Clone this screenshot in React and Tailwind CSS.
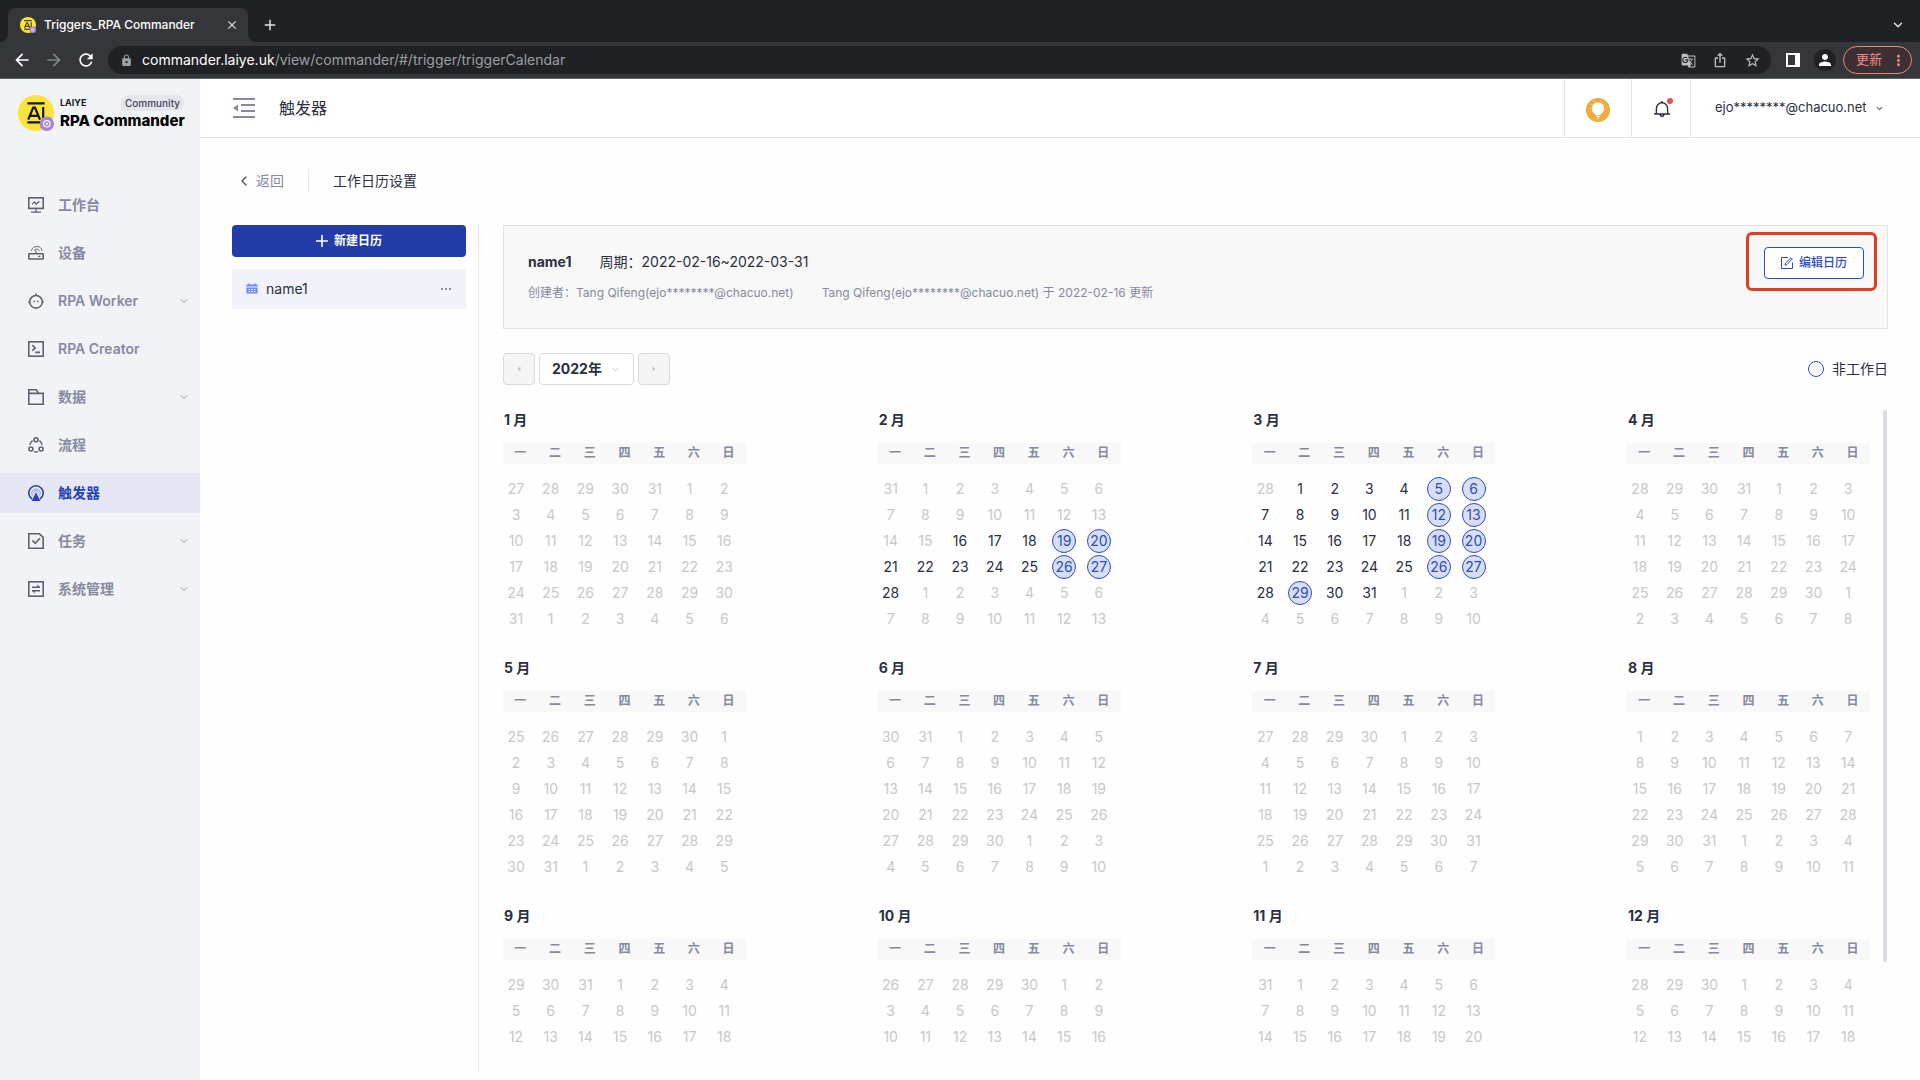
import React, { useState } from 'react';
import {
    MdArrowBack,
    MdArrowForward,
    MdRefresh,
    MdLock,
    MdClose,
    MdAdd,
    MdGTranslate,
    MdIosShare,
    MdStarBorder,
    MdPerson,
    MdMoreVert,
} from 'react-icons/md';
import { ChevronDown, ChevronLeft } from 'lucide-react';

const YEAR = 2022;
const PERIOD = { start: new Date(2022, 1, 16), end: new Date(2022, 2, 31) };
const EXTRA_DAYS_OFF = ['3-29'];
const WEEKDAYS = ['一', '二', '三', '四', '五', '六', '日'];

const NAV_ITEMS = [
    { label: '工作台', icon: 'board' },
    { label: '设备', icon: 'device' },
    { label: 'RPA Worker', icon: 'worker', expandable: true },
    { label: 'RPA Creator', icon: 'creator' },
    { label: '数据', icon: 'data', expandable: true },
    { label: '流程', icon: 'flow' },
    { label: '触发器', icon: 'trigger', active: true },
    { label: '任务', icon: 'task', expandable: true },
    { label: '系统管理', icon: 'system', expandable: true },
];

const NAV_ICONS = {
    board: (
        <>
            <rect x="0.8" y="0.8" width="14.4" height="10.6" />
            <path d="M8 11.4V15M3 15.2h10M4.2 7.4 6.4 5l2 2 3-2.8" strokeWidth="1.3" />
        </>
    ),
    device: (
        <>
            <rect x="0.8" y="8.8" width="14.4" height="5.2" rx="0.5" />
            <path d="M10 11.4h2.4M8 8.6V5.4" strokeWidth="1.2" />
            <path d="M3.4 6A5.2 5.2 0 0 1 8.9 1.5 5.2 5.2 0 0 1 14 6M5.9 6A3 3 0 0 1 11.5 6" strokeWidth="0.9" />
        </>
    ),
    worker: (
        <>
            <circle cx="8" cy="8.8" r="6.3" />
            <path d="M8 .2v2.2M.2 8.8h1.4M14.4 8.8h1.4M6.3 7.4v1.8M9.7 7.4v1.8" strokeWidth="1.3" />
        </>
    ),
    creator: (
        <>
            <rect x="0.8" y="0.8" width="14.4" height="14.4" />
            <path d="m4.2 4.2 3 2.8-3 2.6M7.2 11.4h4.8" />
        </>
    ),
    data: <path d="M.8 15.2V.8h7.4l2.4 3.6h4.6v10.8H.8ZM.8 4.4h9.8" />,
    flow: (
        <>
            <circle cx="8" cy="2.8" r="2" />
            <circle cx="2.9" cy="12" r="2" />
            <circle cx="13.1" cy="12" r="2" />
            <path d="M4.6 3.6A6.4 6.4 0 0 0 1.8 8M11.4 3.6A6.4 6.4 0 0 1 14.2 8M6 14.6q2 .7 4 0" strokeWidth="1.4" />
        </>
    ),
    trigger: (
        <>
            <path d="M4 14a7.2 7.2 0 1 1 8 0" />
            <path d="M4.4 10.6a4.3 4.3 0 1 1 7.2 0M6 8.6a2.2 2.2 0 1 1 4 0" strokeWidth="0.8" opacity="0.55" />
            <path d="M8 7.2 12.4 16H3.6Z" fill="currentColor" stroke="none" />
        </>
    ),
    task: <path d="M.8.8h10.6l3.8 3.6v10.8H.8ZM4.4 7.4l2.8 3 4.8-5.2" />,
    system: (
        <>
            <rect x="0.8" y="0.8" width="14.4" height="14.4" />
            <path d="M4 6.2h8M4 9.8h8" strokeWidth="1.4" />
            <path d="M9.2 3.6 12.4 6.4H9.2ZM6.8 12.4 3.6 9.6h3.2Z" fill="currentColor" stroke="none" />
        </>
    ),
};

const NavIcon = ({ name }) => (
    <svg viewBox="0 0 16 16" className="h-4 w-4 shrink-0" fill="none" stroke="currentColor" strokeWidth="1.6">
        {NAV_ICONS[name]}
    </svg>
);

const LogoMark = ({ className }) => (
    <svg viewBox="0 0 36 36" className={className} aria-hidden="true">
        <circle cx="18" cy="18" r="18" fill="#f9e43c" />
        <path d="M9.4 8.4h17.2M9.4 27.4H23" stroke="#15161a" strokeWidth="2.2" />
        <path d="M10.2 24.6 15.2 12.6h1.8l5 12M12.2 20.8h7.8M25.2 12v11" fill="none" stroke="#15161a" strokeWidth="2.2" />
        <circle cx="28.8" cy="28.8" r="7.2" fill="#a883d6" />
        <circle cx="28.8" cy="28.8" r="3.2" fill="none" stroke="#fff" strokeWidth="1.2" />
        <circle cx="28.8" cy="28.8" r="1.1" fill="#fff" />
    </svg>
);

const BrowserChrome = () => (
    <div className="shrink-0 bg-[#202124] text-[#dfe1e5]">
        <div className="flex h-[42px] items-end pr-4 pl-2">
            <div className="relative flex h-[34px] w-60 items-center rounded-t-lg bg-[#35363a] pr-2 pl-3">
                <svg viewBox="0 0 8 8" className="absolute bottom-0 -left-2 h-2 w-2 text-[#35363a]">
                    <path d="M8 0v8H0a8 8 0 0 0 8-8Z" fill="currentColor" />
                </svg>
                <svg viewBox="0 0 8 8" className="absolute -right-2 bottom-0 h-2 w-2 text-[#35363a]">
                    <path d="M0 0v8h8a8 8 0 0 1-8-8Z" fill="currentColor" />
                </svg>
                <LogoMark className="h-4 w-4" />
                <span className="ml-2 flex-1 text-xs font-medium whitespace-nowrap text-white">Triggers_RPA Commander</span>
                <button aria-label="Close tab" className="flex h-4 w-4 items-center justify-center">
                    <MdClose size={14} />
                </button>
            </div>
            <button aria-label="New tab" className="ml-3 flex h-[34px] w-5 items-center justify-center">
                <MdAdd size={18} />
            </button>
            <button aria-label="Search tabs" className="ml-auto flex h-[34px] w-3 items-center justify-center">
                <ChevronDown size={14} strokeWidth={2.6} className="shrink-0" />
            </button>
        </div>
        <div className="flex h-[37px] items-center border-b border-[#5f6368] bg-[#35363a] pr-2 pl-3">
            <button aria-label="Back" className="text-white"><MdArrowBack size={20} /></button>
            <button aria-label="Forward" className="ml-3 text-[#85878a]"><MdArrowForward size={20} /></button>
            <button aria-label="Reload" className="ml-3 text-white"><MdRefresh size={20} /></button>
            <div className="ml-3 flex h-7 flex-1 items-center rounded-full bg-[#202124] pr-2.5 pl-3 text-[#bdc1c6]">
                <MdLock size={13} className="text-[#9aa0a6]" />
                <span className="ml-[9px] text-sm text-[#9aa0a6]">
                    <span className="text-white">commander.laiye.uk</span>/view/commander/#/trigger/triggerCalendar
                </span>
                <button aria-label="Translate" className="ml-auto"><MdGTranslate size={15} /></button>
                <button aria-label="Share" className="ml-4"><MdIosShare size={16} /></button>
                <button aria-label="Bookmark" className="ml-4"><MdStarBorder size={17} /></button>
            </div>
            <button aria-label="Side panel" className="ml-[15px]">
                <svg viewBox="0 0 14 14" className="h-3.5 w-3.5">
                    <path d="M0 0h14v14H0Zm2 2v10h7V2Z" fill="#fff" fillRule="evenodd" />
                </svg>
            </button>
            <button aria-label="Profile" className="ml-3.5 flex h-[22px] w-[22px] items-center justify-center rounded-full bg-[#202124] text-white">
                <MdPerson size={18} />
            </button>
            <button className="ml-[7px] flex h-7 items-center rounded-full border border-[#e8877d] bg-[#3c3034] pr-1 pl-3 text-[13px] text-[#f28b82]">
                更新
                <MdMoreVert size={17} className="ml-2" />
            </button>
        </div>
    </div>
);

const Sidebar = () => (
    <aside className="w-50 shrink-0 bg-[#f2f3f7]">
        <div className="flex h-[106px] items-start pt-4 pl-[18px]">
            <LogoMark className="h-9 w-9 shrink-0" />
            <div className="ml-1.5 w-[124px]">
                <div className="flex items-center justify-between">
                    <span className="text-[9px] leading-4 font-bold text-[#15161a]">LAIYE</span>
                    <span className="rounded-full rounded-bl-none bg-[#e4e6ec] px-1 text-[10px] leading-4 font-medium text-[#3f4557]">
                        Community
                    </span>
                </div>
                <div className="text-[15px] leading-5 font-extrabold whitespace-nowrap text-black">RPA Commander</div>
            </div>
        </div>
        <nav className="flex flex-col gap-2 text-sm font-semibold text-[#858aa0]">
            {NAV_ITEMS.map((item) => (
                <a
                    key={item.label}
                    href="#"
                    className={`flex h-10 items-center pr-2.5 pl-7 ${item.active ? 'bg-[#e5e8f4] text-[#2543b5]' : ''}`}
                >
                    <span className={item.active ? 'text-[#2543b5]' : 'text-[#5d6273]'}>
                        <NavIcon name={item.icon} />
                    </span>
                    <span className="ml-3.5 flex-1">{item.label}</span>
                    {item.expandable && <ChevronDown size={12} strokeWidth={2} className="text-[#9a9eae]" />}
                </a>
            ))}
        </nav>
    </aside>
);

const TopBar = () => (
    <header className="flex h-[59px] shrink-0 items-stretch border-b border-[#e4e5ec] bg-white">
        <button aria-label="Collapse menu" className="ml-[33px] flex items-center pb-px">
            <svg viewBox="0 0 22 20" className="h-5 w-[22px]" fill="none" stroke="#858aa0" strokeWidth="2">
                <path d="M0 1h22M8 7h14M8 13h14M0 19h22" />
                <path d="M0 10 5 6.4v7.2Z" fill="#858aa0" stroke="none" />
            </svg>
        </button>
        <h1 className="ml-6 flex items-center text-base text-[#2a3040]">触发器</h1>
        <button aria-label="Tips" className="ml-auto flex w-[67px] items-center justify-center border-l border-[#e4e5ec] pt-1">
            <svg viewBox="0 0 24 24" className="h-6 w-6">
                <circle cx="12" cy="12" r="12" fill="#eeaa3c" />
                <path d="M12 4.6a6 6 0 0 0-3.2 11.1c.6.4.9.9 1 1.5h4.4c.1-.6.4-1.1 1-1.5A6 6 0 0 0 12 4.6Z" fill="#fff" />
                <path d="M10 18.4h4M10.8 20.2h2.4" stroke="#fff" strokeWidth="1" />
                <path d="M5.6 6.4h.8M17.6 6.4h.8M8 3.4h.8M15.2 3.4h.8M4.2 10.4H5M19 10.4h.8" stroke="#fff" strokeWidth="0.8" />
            </svg>
        </button>
        <button aria-label="Notifications" className="flex w-[59px] items-center justify-center border-l border-[#e4e5ec] pl-1">
            <svg viewBox="0 0 20 20" className="h-5 w-5" fill="none" stroke="#2a3040" strokeWidth="1.4">
                <path d="M1 16h16M3.4 16v-5.6a5.6 5.6 0 0 1 11.2 0V16M9 4.6V3M7.2 16.4a1.8 1.8 0 0 0 3.6 0" />
                <circle cx="17" cy="3" r="3" fill="#e5534b" stroke="none" />
            </svg>
        </button>
        <button className="flex w-[230px] items-center border-l border-[#e4e5ec] pl-6 text-[13px] text-[#2a3040]">
            ejo********@chacuo.net
            <ChevronDown size={9} strokeWidth={3} className="ml-2 text-[#5d6273]" />
        </button>
    </header>
);

const CalendarList = () => (
    <div className="w-[247px] shrink-0 border-r border-[#e8e9ee] pr-3">
        <button className="flex h-8 w-full items-center justify-center rounded bg-[#243ca8] text-xs font-semibold text-white">
            <svg viewBox="0 0 12 12" className="mr-1.5 h-3 w-3">
                <path d="M6 0v12M0 6h12" stroke="currentColor" strokeWidth="1.6" />
            </svg>
            新建日历
        </button>
        <div className="mt-3 flex h-10 items-center bg-[#f2f3fa] px-3.5 text-sm text-[#2a3040]">
            <svg viewBox="0 0 12 12" className="h-3 w-3" fill="#6b8afc">
                <path d="M.4 1.4h1.8V.4h1.4v1h4.8v-1h1.4v1h1.8v2.2H.4ZM.4 4.4h11.2v6.2H.4Z" />
                <path d="M2.6 6h1.6v1H2.6ZM5.2 6h1.6v1H5.2ZM7.8 6h1.6v1H7.8ZM2.6 8h1.6v1H2.6ZM5.2 8h1.6v1H5.2ZM7.8 8h1.6v1H7.8Z" fill="#fff" />
            </svg>
            <span className="ml-2 flex-1">name1</span>
            <button aria-label="More" className="p-px">
                <svg viewBox="0 0 10 2" className="h-0.5 w-2.5" fill="#8a8d99">
                    <path d="M0 0h2v2H0ZM4 0h2v2H4ZM8 0h2v2H8Z" />
                </svg>
            </button>
        </div>
    </div>
);

const DetailPanel = () => (
    <div className="flex items-start justify-between border border-[#e1e3ea] bg-[#f8f8f8] pt-[21px] pr-[23px] pb-[25px] pl-6">
        <div className="pt-[3px]">
            <div className="flex items-center text-sm leading-6 text-[#2a3040]">
                <span className="font-bold">name1</span>
                <span className="ml-7">周期：2022-02-16~2022-03-31</span>
            </div>
            <div className="mt-[9px] flex items-center gap-7 text-xs leading-5 text-[#858aa0]">
                <span>创建者：Tang Qifeng(ejo********@chacuo.net)</span>
                <span>Tang Qifeng(ejo********@chacuo.net) 于 2022-02-16 更新</span>
            </div>
        </div>
        <div className="relative">
            <button className="flex h-8 w-[100px] items-center justify-center rounded border border-[#2d4bc4] bg-white text-xs font-medium text-[#2d4bc4]">
                <svg viewBox="0 0 12 12" className="mr-1.5 h-3 w-3" fill="none" stroke="currentColor">
                    <path d="M7 .5H.5v11h11V5.4M4 8.2l.4-2L10 .7l1.3 1.3L5.8 7.7Z" />
                </svg>
                编辑日历
            </button>
            <span className="pointer-events-none absolute -top-[15px] -right-[13px] -bottom-3 -left-[18px] rounded-md border-[3px] border-[#e23b24]" />
        </div>
    </div>
);

const YearControls = () => {
    const [year, setYear] = useState(String(YEAR));
    return (
        <div className="mt-6 flex h-8 items-center gap-1">
            <button aria-label="上一年" className="flex h-8 w-8 items-center justify-center rounded border border-[#d9d9d9] bg-[#f5f5f5]">
                <svg viewBox="0 0 4 6" className="h-1.5 w-1 text-[#c0c0c0]"><path d="M3.4.6v4.8L.6 3Z" fill="currentColor" /></svg>
            </button>
            <div className="relative">
                <select
                    aria-label="年份"
                    value={year}
                    onChange={(e) => setYear(e.target.value)}
                    className="h-8 w-[95px] appearance-none rounded border border-[#d9d9d9] bg-white pl-3 text-sm font-bold text-[#2a3040]"
                >
                    <option value="2022">2022年</option>
                </select>
                <ChevronDown size={9} className="pointer-events-none absolute top-3 right-3.5 text-[#b8b8b8]" />
            </div>
            <button aria-label="下一年" className="flex h-8 w-8 items-center justify-center rounded border border-[#d9d9d9] bg-[#f5f5f5]">
                <svg viewBox="0 0 4 6" className="h-1.5 w-1 text-[#c0c0c0]"><path d="M.6.6v4.8L3.4 3Z" fill="currentColor" /></svg>
            </button>
            <label className="ml-auto flex items-center gap-2 text-sm text-[#2a3040]">
                <input type="radio" name="dayType" className="h-4 w-4 appearance-none rounded-full border border-[#2d4bc4]" />
                非工作日
            </label>
        </div>
    );
};

// six Monday-first weeks covering the month
const getWeeks = (month) => {
    const offset = (new Date(YEAR, month, 1).getDay() + 6) % 7;
    return Array.from({ length: 6 }, (_, w) =>
        Array.from({ length: 7 }, (_, d) => new Date(YEAR, month, 1 - offset + w * 7 + d))
    );
};

const getDayClass = (date, month) => {
    const inPeriod = date.getMonth() === month && date >= PERIOD.start && date <= PERIOD.end;
    if (!inPeriod) return 'pb-px text-[#c8c8c8]';
    const isWeekend = date.getDay() === 0 || date.getDay() === 6;
    const isOff = isWeekend || EXTRA_DAYS_OFF.includes(`${date.getMonth() + 1}-${date.getDate()}`);
    return isOff ? 'rounded-full border border-[#2d4bc4] bg-[#d8dff4] text-[#2d4bc4]' : 'pb-px text-[#2a3040]';
};

const Month = ({ month }) => (
    <section>
        <h2 className="pl-px text-sm leading-5 font-bold text-[#2a3040]">{month + 1} 月</h2>
        <table className="mt-[13px] w-full table-fixed border-collapse">
            <thead>
                <tr className="h-[21px] bg-[#f8f8f8]">
                    {WEEKDAYS.map((day) => (
                        <th key={day} className="p-0 pb-px text-xs leading-5 font-semibold text-[#858aa0]">{day}</th>
                    ))}
                </tr>
            </thead>
            <tbody className="before:block before:h-[11px] before:content-['']">
                {getWeeks(month).map((week, idx) => (
                    <tr key={idx} className="h-[26px]">
                        {week.map((date) => (
                            <td key={date.getTime()} className="p-0 pl-px align-bottom">
                                <span className={`flex h-6 w-6 items-center justify-center text-sm ${getDayClass(date, month)}`}>
                                    {date.getDate()}
                                </span>
                            </td>
                        ))}
                    </tr>
                ))}
            </tbody>
        </table>
    </section>
);

const YearCalendar = () => (
    <div className="mt-[25px] mb-5 flex min-h-0 flex-1">
        <div className="grid flex-1 auto-rows-min grid-cols-[repeat(4,243px)] justify-between gap-y-[27px] overflow-y-auto [scrollbar-width:none]">
            {Array.from({ length: 12 }, (_, month) => (
                <Month key={month} month={month} />
            ))}
        </div>
        <div className="mr-px ml-[13px] h-[86%] w-1 shrink-0 rounded-full bg-[#dadce3]" />
    </div>
);

const App = () => (
    <div className="flex h-screen flex-col overflow-hidden font-['Inter','Noto_Sans_CJK_SC',sans-serif]">
        <BrowserChrome />
        <div className="flex min-h-0 flex-1">
            <Sidebar />
            <main className="flex min-w-0 flex-1 flex-col bg-[#fefefe]">
                <TopBar />
                <div className="flex min-h-0 flex-1 flex-col px-8 pt-[31px] pb-2">
                    <div className="flex h-6 shrink-0 items-center text-sm">
                        <a href="#" className="flex items-center pl-1 text-[#858aa0]">
                            <ChevronLeft size={16} className="mr-1 text-[#4a4f5e]" />
                            返回
                        </a>
                        <span className="mx-6 h-6 w-px bg-[#e8e9ee]" />
                        <span className="text-[#2a3040]">工作日历设置</span>
                    </div>
                    <div className="mt-8 flex min-h-0 flex-1">
                        <CalendarList />
                        <div className="ml-6 flex min-w-0 flex-1 flex-col">
                            <DetailPanel />
                            <YearControls />
                            <YearCalendar />
                        </div>
                    </div>
                </div>
            </main>
        </div>
    </div>
);

export default App;
